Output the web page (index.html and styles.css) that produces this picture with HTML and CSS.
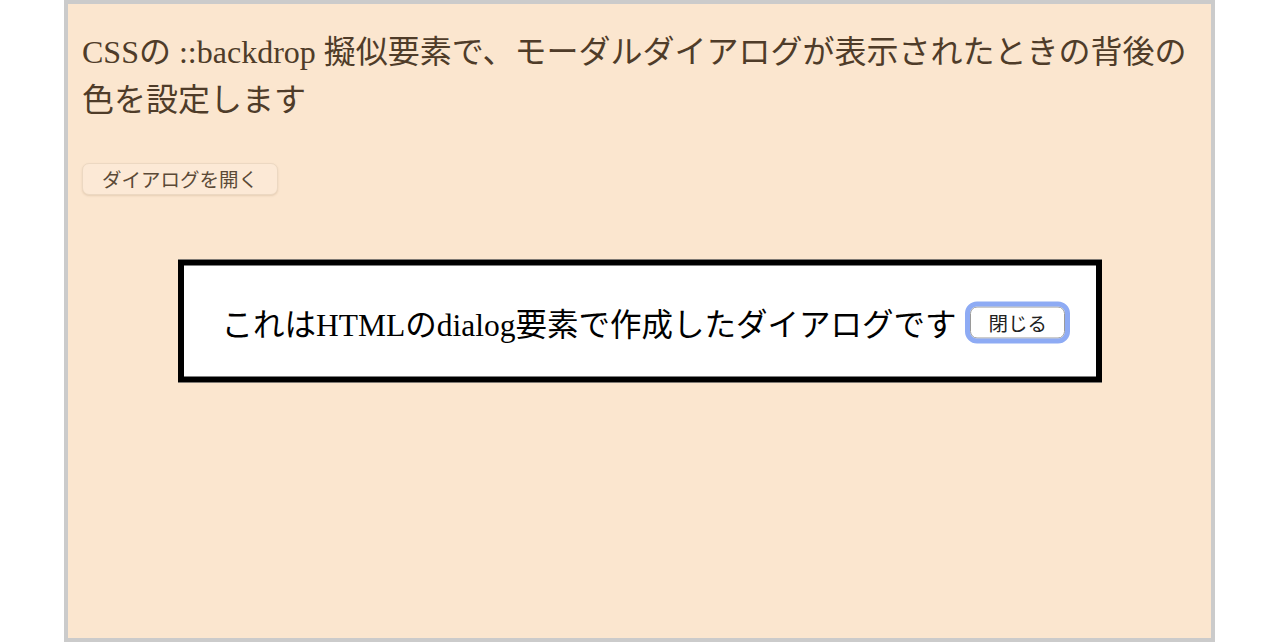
FILE: index.html
```html
<!DOCTYPE html>
<html lang="ja">
<head>
    <meta charset="UTF-8">
    <meta name="viewport" content="width=device-width, initial-scale=1.0">
    <title>::backdrop デモ</title>
    <link rel="stylesheet" href="styles.css">
</head>
<body>
    <div class="frame">
        <p class="title">CSSの ::backdrop 擬似要素で、モーダルダイアログが表示されたときの背後の色を設定します</p>
        <button class="button open-button">ダイアログを開く</button>

        <div class="dialog">
            <span class="dialog-text">これはHTMLのdialog要素で作成したダイアログです</span>
            <button class="button close-button">閉じる</button>
        </div>
    </div>
</body>
</html>
```

FILE: styles.css
```css
body {
    margin: 0;
    background: #fff;
}
.frame {
    position: relative;
    box-sizing: border-box;
    width: 1151px;
    height: 642px;
    margin-left: 64px;
    padding: 24px 20px 0 14px;
    border: 4px solid #cbcbcb;
    background: #fbe6cf;
}
.title {
    margin: 0;
    font-family: "Liberation Serif", "Noto Sans CJK JP", serif;
    font-size: 32px;
    font-weight: normal;
    line-height: 48px;
    color: #4f3c29;
}
.button {
    font-family: "Noto Sans CJK JP", sans-serif;
    font-size: 19.5px;
    line-height: 25px;
    padding: 2px 19px 3px;
    border-radius: 7px;
    cursor: pointer;
}
.open-button {
    display: block;
    margin-top: 39px;
    border: 1px solid #ecd8c2;
    background: #fce9d6;
    color: #5b4936;
    box-shadow: 0 1px 2px rgba(140, 100, 60, 0.18);
}
/* modal box, centred over the backdrop */
.dialog {
    position: absolute;
    left: 50%;
    top: 50%;
    transform: translate(-50%, -50%);
    box-sizing: border-box;
    width: 924px;
    height: 123px;
    padding: 0 0 0 38px;
    display: flex;
    align-items: center;
    gap: 14px;
    border: 6px solid #000;
    background: #fff;
}
.dialog-text {
    font-family: "Liberation Serif", "Noto Sans CJK JP", serif;
    font-size: 31.5px;
    color: #000;
    white-space: nowrap;
}
.close-button {
    margin-top: 2px;
    padding: 2px 17px 3px;
    border: 1px solid #9a9a9a;
    background: #fff;
    color: #222;
    outline: 5px solid #8eabf4;
}
```
